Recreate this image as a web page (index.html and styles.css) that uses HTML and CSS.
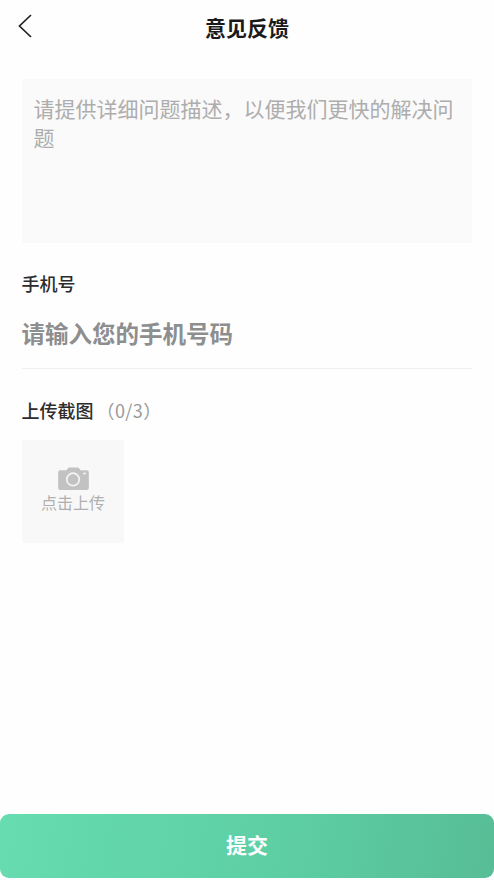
FILE: index.html
```html
<!DOCTYPE html>
<html lang="zh">
<head>
<meta charset="utf-8">
<title>意见反馈</title>
<link rel="stylesheet" href="styles.css">
</head>
<body>
<div class="page">
  <header class="nav">
    <svg class="back" width="16" height="26" viewBox="0 0 16 26"><path d="M14 2 L2.500 13 L14 24" fill="none" stroke="#222" stroke-width="1.700"/></svg>
    <h1 class="title">意见反馈</h1>
  </header>
  <main class="form">
    <div class="desc">请提供详细问题描述，以便我们更快的解决问题</div>
    <div class="label phone-label">手机号</div>
    <div class="phone">请输入您的手机号码</div>
    <div class="label upload-label">上传截图<span class="count">（0/3）</span></div>
    <div class="upload">
      <svg class="camera" width="31" height="23" viewBox="0 0 32 24">
        <path fill="#c2c2c2" d="M2 3.500h6.500L11 0.500h10l2.500 3H30a2 2 0 0 1 2 2V22a2 2 0 0 1-2 2H2a2 2 0 0 1-2-2V5.500a2 2 0 0 1 2-2z"/>
        <circle cx="15.500" cy="13" r="6.500" fill="none" stroke="#f4f4f4" stroke-width="1.800"/>
        <rect x="26" y="6" width="3" height="1.600" fill="#f4f4f4"/>
      </svg>
      <span class="upload-text">点击上传</span>
    </div>
  </main>
  <button class="submit">提交</button>
</div>
</body>
</html>
```
FILE: styles.css
```css
* { box-sizing: border-box; }
html, body { margin: 0; padding: 0; }
body {
  width: 494px;
  height: 880px;
  overflow: hidden;
  background: #fefefe;
  font-family: "Noto Sans CJK SC", "Liberation Sans", sans-serif;
}
.page {
  height: 880px;
  display: flex;
  flex-direction: column;
}
.nav {
  height: 79px;
  flex: none;
  position: relative;
  padding-top: 12px;
  text-align: center;
}
.back { position: absolute; left: 17px; top: 13px; }
.title {
  margin: 0;
  font-size: 21px;
  line-height: 30px;
  font-weight: 700;
  color: #1a1a1a;
}
.form {
  flex: 1;
  padding: 0 22px;
}
.desc {
  height: 164px;
  background: #fafafa;
  padding: 15px 12px 15px 11.500px;
  font-size: 21px;
  line-height: 29px;
  color: #adadad;
}
.label {
  font-size: 18px;
  line-height: 26px;
  font-weight: 500;
  color: #2c2c2c;
  margin-left: -0.500px;
}
.phone-label { margin-top: 27px; }
.phone {
  width: 450px;
  height: 73px;
  border-bottom: 1px solid #f0f0f0;
  padding-top: 20px;
  font-size: 23.500px;
  line-height: 34px;
  font-weight: 700;
  color: #8e8e8e;
  margin-left: -0.500px;
}
.upload-label { margin-top: 28px; }
.count {
  font-weight: 400;
  color: #9a9a9a;
  margin-left: 3px;
  letter-spacing: 0.400px;
}
.upload {
  width: 102px;
  height: 103px;
  margin-top: 17px;
  background: #f8f8f8;
  border-radius: 3px;
  padding-top: 27px;
  display: flex;
  flex-direction: column;
  align-items: center;
}
.camera { display: block; }
.upload-text {
  font-size: 16px;
  line-height: 24px;
  color: #b0b0b0;
}
.submit {
  flex: none;
  width: 494px;
  height: 64px;
  margin-bottom: 2px;
  border: 0;
  border-radius: 9px;
  background: linear-gradient(100deg, #66dcb0 0%, #5ecfa5 55%, #57bd96 100%);
  color: #fff;
  font-family: inherit;
  font-size: 21px;
  font-weight: 700;
  padding: 0 0 5px;
}
```
